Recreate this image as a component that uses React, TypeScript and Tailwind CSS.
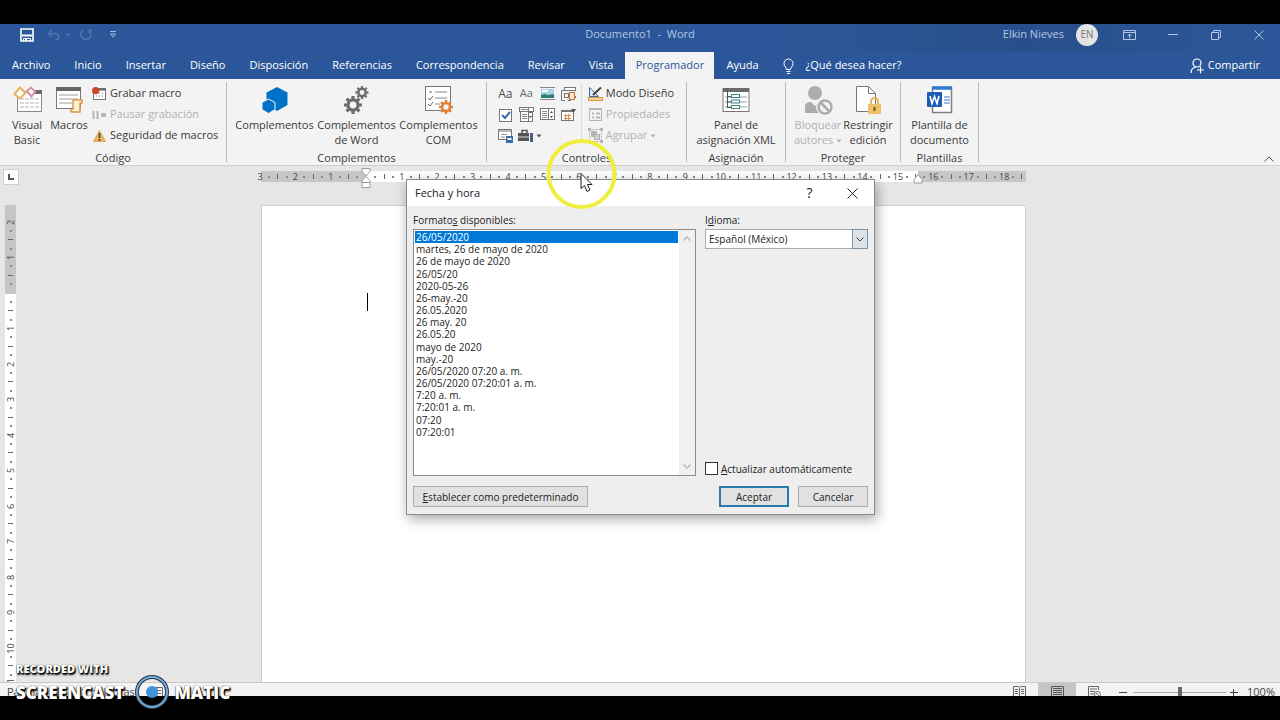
import { useState, type ReactNode } from 'react';

const TABS = [
  'Archivo',
  'Inicio',
  'Insertar',
  'Diseño',
  'Disposición',
  'Referencias',
  'Correspondencia',
  'Revisar',
  'Vista',
  'Programador',
  'Ayuda',
];

const FORMATS = [
  '26/05/2020',
  'martes, 26 de mayo de 2020',
  '26 de mayo de 2020',
  '26/05/20',
  '2020-05-26',
  '26-may.-20',
  '26.05.2020',
  '26 may. 20',
  '26.05.20',
  'mayo de 2020',
  'may.-20',
  '26/05/2020 07:20 a. m.',
  '26/05/2020 07:20:01 a. m.',
  '7:20 a. m.',
  '7:20:01 a. m.',
  '07:20',
  '07:20:01',
];

/* ---------- Icons ---------- */

function VisualBasicIcon() {
  return (
    <svg width="29" height="28" viewBox="0 0 29 28" fill="none">
      <rect x="4.5" y="5.5" width="24" height="20" fill="#fff" stroke="#8a8a8a" />
      <rect x="22" y="4" width="7" height="4" fill="#6a6a6a" />
      <path d="M7 13h20M7 17h20M7 21h20" stroke="#b5b5b5" strokeDasharray="4 1" />
      <path d="M7 1.500l5.500 5.500L7 12.500 1.500 8z" fill="#fff" stroke="#e3b55b" strokeWidth="2" />
      <path d="M14 5l4-3.500 4 4-3.500 5z" fill="#fff" stroke="#dc8f9c" strokeWidth="2" />
    </svg>
  );
}

function MacrosIcon() {
  return (
    <svg width="29" height="28" viewBox="0 0 29 28" fill="none">
      <rect x="1.5" y="1.5" width="24" height="21" fill="#fff" stroke="#777" />
      <rect x="1" y="1" width="25" height="4" fill="#666" />
      <path d="M4 9h19M4 13h19M4 17h13" stroke="#9a9a9a" />
      <path d="M18 14h9v3h-2v9h-8c-2 0-2-3 0-3h1z" fill="#fdf1dc" stroke="#d99a3e" strokeWidth="1.5" />
    </svg>
  );
}

function RecordIcon() {
  return (
    <svg width="15" height="14" viewBox="0 0 15 14" fill="none">
      <rect x="1.5" y="1.5" width="12" height="11" fill="#fff" stroke="#777" />
      <path d="M7 2.500h7" stroke="#666" strokeWidth="2" />
      <path d="M4 9h1M7 9h1M10 9h1M7 6h1M10 6h1" stroke="#777" />
      <circle cx="3.700" cy="3.700" r="3.600" fill="#cf4528" />
    </svg>
  );
}

function PauseIcon() {
  return (
    <svg width="15" height="14" viewBox="0 0 15 14" fill="none">
      <path d="M1.5 3v8M5.5 3v8" stroke="#b5b5b5" strokeWidth="2" />
      <rect x="9" y="5" width="5" height="4" rx="1" fill="#b5b5b5" />
    </svg>
  );
}

function WarningIcon() {
  return (
    <svg width="15" height="14" viewBox="0 0 15 14" fill="none">
      <path d="M7.500 1.500L13.500 12.500h-12z" fill="#f0b35e" stroke="#e8aa58" strokeLinejoin="round" />
      <path d="M7.500 4v5M7.500 10v2" stroke="#444" strokeWidth="1.600" />
    </svg>
  );
}

function AddinsIcon() {
  return (
    <svg width="28" height="28" viewBox="0 0 28 28">
      <path d="M16 1l10.500 5.500v12.500L16 25 5.500 19V6.500z" fill="#0072c6" />
      <path d="M7.500 13l6.500 3.500v7l-6.500 4-6.500-4v-7z" fill="#0072c6" stroke="#f3f3f3" />
    </svg>
  );
}

function Gear({ x, y, r, color }: { x: number; y: number; r: number; color: string }) {
  return (
    <g transform={`translate(${x} ${y})`} stroke={color} fill="none">
      <circle r={r * 0.56} strokeWidth={r * 0.36} />
      {[0, 45, 90, 135].map((a) => (
        <path
          key={a}
          transform={`rotate(${a})`}
          d={`M0 ${-r}V${-r * 0.65}M0 ${r * 0.65}V${r}`}
          strokeWidth={r * 0.36}
        />
      ))}
    </g>
  );
}

function GearsIcon() {
  return (
    <svg width="28" height="28" viewBox="0 0 28 28">
      <Gear x={10} y={19} r={9} color="#6d6d6d" />
      <Gear x={19} y={6.5} r={6.5} color="#6d6d6d" />
    </svg>
  );
}

function ComAddinsIcon() {
  return (
    <svg width="30" height="28" viewBox="0 0 30 28" fill="none">
      <rect x="1.5" y="0.5" width="25" height="24" fill="#fff" stroke="#777" />
      <path d="M11 6h12M11 12h12M11 18h5" stroke="#888" />
      <path d="M5 6h3M4 12l2 2 3-4M4 18l2 2 3-4" stroke="#666" />
      <circle cx="22" cy="21" r="5" fill="#f3f3f3" />
      <Gear x={22} y={21} r={7} color="#e07f35" />
    </svg>
  );
}

function XmlPaneIcon() {
  return (
    <svg width="28" height="26" viewBox="0 0 28 26" fill="none">
      <rect x="1" y="1.5" width="26" height="23" fill="#fff" stroke="#777" />
      <path d="M1 3h26" stroke="#6a6a6a" strokeWidth="4" />
      <path d="M3 10h22M3 15h22M3 20h22" stroke="#8aa7a3" />
      <path d="M5.500 1v20M5 9.500h4M5 15h4M5 20.500h4" stroke="#555" />
      <rect x="9.500" y="7.500" width="8" height="3" fill="#fff" stroke="#3d8584" />
      <rect x="9.500" y="13" width="8" height="3" fill="#fff" stroke="#3d8584" />
      <rect x="9.500" y="18.500" width="8" height="3" fill="#fff" stroke="#3d8584" />
    </svg>
  );
}

function BlockAuthorsIcon() {
  return (
    <svg width="30" height="30" viewBox="0 0 30 30" fill="none">
      <circle cx="12" cy="8" r="7" fill="#acacac" />
      <path d="M2 28v-6c0-4 3-5 6-5l4 4 4-4 4 2-4 9z" fill="#acacac" />
      <circle cx="22" cy="22" r="9" fill="#f3f3f3" />
      <circle cx="22" cy="22" r="6.500" stroke="#acacac" strokeWidth="2.500" />
      <path d="M17.500 17.500l9 9" stroke="#acacac" strokeWidth="2.500" />
    </svg>
  );
}

function RestrictIcon() {
  return (
    <svg width="28" height="30" viewBox="0 0 28 30" fill="none">
      <path d="M2.500 1.500h12l7 7v18h-19z" fill="#fff" stroke="#777" />
      <path d="M14.500 1.500v7h7" stroke="#777" />
      <path d="M17 20v-3.500a3.500 3.500 0 017 0V20" stroke="#e8b655" strokeWidth="2" />
      <rect x="14" y="19" width="13" height="10" fill="#eec168" />
      <path d="M20.500 22v4" stroke="#7a5a1c" strokeWidth="2" />
    </svg>
  );
}

function TemplateIcon() {
  return (
    <svg width="28" height="30" viewBox="0 0 28 30" fill="none">
      <path d="M6.500 2.500h19v25h-19z" fill="#fff" stroke="#808080" strokeWidth="1.500" />
      <path d="M6 3h20" stroke="#2f7ad0" strokeWidth="3.500" />
      <path d="M18 12h6M18 15h6M18 18h6" stroke="#2f7ad0" />
      <rect x="1" y="7" width="15" height="15" rx="1" fill="#1d5cb4" />
      <path d="M4 11l2 7.500 2.500-7 2.500 7 2-7.500" stroke="#fff" strokeWidth="1.600" />
    </svg>
  );
}

function RichTextIcon({ faint = false }: { faint?: boolean }) {
  return <span className={faint ? 'text-[11px] text-[#6a6a6a]' : 'text-[12px] text-[#4a4a4a]'}>Aa</span>;
}

function PictureIcon() {
  return (
    <svg width="15" height="13" viewBox="0 0 15 13" fill="none">
      <path d="M0 .5h15M0 12.500h15" stroke="#888" />
      <rect x="1" y="2" width="13" height="9" fill="#a9d3e6" />
      <path d="M1 11V8l4-1 3 1 6-1v4z" fill="#2f7e75" />
      <path d="M2 4h6" stroke="#fff" strokeWidth="2" />
    </svg>
  );
}

function BuildingBlocksIcon() {
  return (
    <svg width="15" height="14" viewBox="0 0 15 14" fill="none">
      <path d="M3 3.500H.5v10H4M7 13.500h3M14.500 9v2" stroke="#777" />
      <rect x="3.500" y=".5" width="11" height="3" fill="#fff" stroke="#777" />
      <rect x="3.500" y="6.500" width="4" height="4" stroke="#777" />
      <rect x="8.500" y="5.500" width="5" height="7" fill="#fbe3d0" stroke="#d6722f" />
    </svg>
  );
}

function CheckIcon() {
  return (
    <svg width="15" height="14" viewBox="0 0 15 14" fill="none">
      <rect x="1.500" y="1.500" width="12" height="12" fill="#fff" stroke="#777" />
      <path d="M4 7l3 3 5-6" stroke="#3b6da5" strokeWidth="2" />
    </svg>
  );
}

function ComboIcon({ list = false }: { list?: boolean }) {
  return (
    <svg width="15" height="15" viewBox="0 0 15 15" fill="none">
      {list ? (
        <>
          <rect x=".5" y=".5" width="14" height="4" fill="#fff" stroke="#777" />
          <rect x="1.500" y="4.500" width="12" height="10" fill="#fff" stroke="#777" />
          <path d="M3 7.500h5M3 9.500h5M3 11.500h5M2 2.500h7" stroke="#888" />
          <path d="M9.500 1v13" stroke="#777" />
        </>
      ) : (
        <>
          <rect x=".5" y="1.500" width="14" height="11" fill="#fff" stroke="#777" />
          <path d="M2 4.500h5M2 6.500h5M2 8.500h5M2 10.500h5" stroke="#888" />
          <path d="M8.500 1.500v11" stroke="#777" />
        </>
      )}
      <path d="M10 6l1.500-2L13 6zM10 9l1.500 2L13 9z" fill="#444" />
    </svg>
  );
}

function DatePickerIcon() {
  return (
    <svg width="15" height="14" viewBox="0 0 15 14" fill="none">
      <rect x=".5" y="2.500" width="12" height="10" fill="#fff" stroke="#777" />
      <path d="M1 3h12" stroke="#777" strokeWidth="2" />
      <path d="M3 7.500h7M3 10.500h7M4.500 6v6M7.500 6v6" stroke="#d98a4e" />
      <path d="M10 1h5l-2.500 4z" fill="#555" />
    </svg>
  );
}

function RepeatIcon() {
  return (
    <svg width="15" height="14" viewBox="0 0 15 14" fill="none">
      <rect x=".5" y=".5" width="13" height="10" fill="#fff" stroke="#777" />
      <path d="M1 2h13" stroke="#777" />
      <path d="M3 5.500h6M3 8h4" stroke="#999" />
      <rect x="8" y="7" width="7" height="7" fill="#3b6da5" />
      <path d="M9.500 9h4v2h-4z" fill="#fff" />
    </svg>
  );
}

function ToolboxIcon() {
  return (
    <svg width="16" height="14" viewBox="0 0 16 14" fill="none">
      <path d="M4 4V1.500h5V4" stroke="#555" strokeWidth="1.500" />
      <rect x="0" y="4" width="11" height="8" fill="#555" />
      <path d="M0 8h11" stroke="#ddd" />
      <path d="M13.500 4v9" stroke="#44617f" strokeWidth="3" />
    </svg>
  );
}

function DesignModeIcon() {
  return (
    <svg width="15" height="15" viewBox="0 0 15 15" fill="none">
      <path d="M1.500 1.500v9h9z" fill="#dbe7f3" stroke="#3b6da5" />
      <path d="M5 9l8-7.500" stroke="#444" strokeWidth="2" />
      <rect x=".5" y="11.500" width="14" height="3" fill="#f7cf98" stroke="#d99a3e" />
    </svg>
  );
}

function PropertiesIcon() {
  return (
    <svg width="15" height="15" viewBox="0 0 15 15" fill="none">
      <rect x="1.500" y="1.500" width="12" height="12" stroke="#b5b5b5" />
      <path d="M1 2h13" stroke="#b5b5b5" strokeWidth="2" />
      <path d="M4 6.500h2M8 6.500h4M4 10.500h2M8 10.500h4" stroke="#b5b5b5" strokeWidth="2" />
    </svg>
  );
}

function GroupIcon() {
  return (
    <svg width="15" height="15" viewBox="0 0 15 15" fill="none">
      <rect x="1.500" y="1.500" width="12" height="12" stroke="#b5b5b5" strokeDasharray="2 1" />
      <rect x="3" y="3" width="6" height="6" fill="#b5b5b5" />
      <rect x="6.500" y="6.500" width="5" height="5" fill="#d5d5d5" stroke="#b0b0b0" />
      <path d="M0 0h3v3H0zM12 0h3v3h-3zM0 12h3v3H0zM12 12h3v3h-3z" fill="#b5b5b5" />
    </svg>
  );
}

function Caret({ color }: { color: string }) {
  return (
    <svg width="6" height="4" viewBox="0 0 6 4" className="inline-block">
      <path d="M0.500 0.500h5L3 3.500z" fill={color} />
    </svg>
  );
}

/* ---------- Title bar and tabs ---------- */

function TitleBar() {
  return (
    <header className="grid h-7 grid-cols-[1fr_auto_1fr] items-start bg-linear-to-r from-[#2b579a] from-60% via-[#294f8b] via-80% to-[#2b579a] text-[11px] text-[#b4c6e2]">
      <div className="flex h-[21px] items-center pl-5">
        <button aria-label="Guardar" className="mr-[13px]">
          <svg width="14" height="14" viewBox="0 0 14 14" fill="none">
            <path d="M1 1h12v12H1z" stroke="#fff" strokeWidth="1.600" />
            <path d="M2 7.500h10" stroke="#fff" strokeWidth="2" />
            <path d="M3.500 13v-2.500h7V13" stroke="#fff" />
            <path d="M6 13v-2" stroke="#fff" strokeWidth="2" />
          </svg>
        </button>
        <button aria-label="Deshacer" className="flex items-center gap-1">
          <svg width="14" height="12" viewBox="0 0 14 12" fill="none">
            <path d="M5 1L1.500 4.500 5 8M2 4.500h6.500a3.200 3.200 0 010 6.500" stroke="#4c72b0" strokeWidth="1.600" />
          </svg>
          <Caret color="#4c72b0" />
        </button>
        <button aria-label="Repetir" className="ml-2">
          <svg width="14" height="13" viewBox="0 0 14 13" fill="none">
            <path d="M4 2.500a5 5 0 106 0M10.500 5.500V2h3" stroke="#4c72b0" strokeWidth="1.600" />
          </svg>
        </button>
        <button aria-label="Personalizar" className="ml-4">
          <svg width="8" height="8" viewBox="0 0 8 8" fill="none">
            <path d="M1 .5h6M1.500 3h5L4 6z" stroke="#a5badc" />
          </svg>
        </button>
      </div>
      <h1 className="flex h-[21px] items-center whitespace-pre">{'Documento1  -  Word'}</h1>
      <div className="flex h-[21px] items-center justify-end">
        <span>Elkin Nieves</span>
        <span className="mr-[10px] ml-3 flex size-[22px] items-center justify-center rounded-full bg-[#e4e4e4] text-[10px] text-[#777]">
          EN
        </span>
        <button aria-label="Opciones de la cinta" className="flex w-[43px] justify-center">
          <svg width="13" height="10" viewBox="0 0 13 10" fill="none" stroke="#b4c6e2">
            <path d="M.5.5h12v9H.5zM.5 2.500h12M6.500 8.500v-4M4.500 6l2-2 2 2" />
          </svg>
        </button>
        <button aria-label="Minimizar" className="flex w-[43px] justify-center">
          <svg width="10" height="10" viewBox="0 0 10 10" stroke="#b4c6e2">
            <path d="M0 4.500h10" />
          </svg>
        </button>
        <button aria-label="Restaurar" className="flex w-[43px] justify-center">
          <svg width="10" height="10" viewBox="0 0 10 10" fill="none" stroke="#b4c6e2">
            <path d="M.5 2.500h7v7h-7zM2.500 2.500v-2h7v7h-2" />
          </svg>
        </button>
        <button aria-label="Cerrar" className="flex w-[43px] justify-center">
          <svg width="10" height="10" viewBox="0 0 10 10" stroke="#b4c6e2">
            <path d="M.5.5l9 9M9.500.5l-9 9" />
          </svg>
        </button>
      </div>
    </header>
  );
}

function TabBar() {
  return (
    <nav className="flex h-[27px] bg-[#2b579a] text-[11px] text-white">
      {TABS.map((tab) => (
        <button
          key={tab}
          className={tab === 'Programador' ? 'w-[89px] bg-[#f3f3f3] text-[#2b579a]' : 'px-3'}
        >
          {tab}
        </button>
      ))}
      <button className="ml-3 flex items-center gap-3">
        <svg width="11" height="16" viewBox="0 0 11 16" fill="none" stroke="#fff">
          <path d="M3.500 11.500c0-2-2.500-3-2.500-6a4.500 4.500 0 019 0c0 3-2.500 4-2.500 6zM3.500 13.500h4M4 15.500h3" />
        </svg>
        ¿Qué desea hacer?
      </button>
      <button className="mr-5 ml-auto flex items-center gap-1">
        <svg width="14" height="16" viewBox="0 0 14 16" fill="none" stroke="#fff" strokeWidth="1.200">
          <circle cx="7" cy="5" r="4" />
          <path d="M1 15c0-3.500 2-5.500 5-6M10.500 8.500v7M7 12h7" />
        </svg>
        Compartir
      </button>
    </nav>
  );
}

/* ---------- Ribbon ---------- */

function Group({ title, className, children }: { title: string; className: string; children: ReactNode }) {
  return (
    <section className={`flex flex-col pt-1 ${className}`}>
      <div className="flex flex-1 justify-center">{children}</div>
      <h2 className="text-center leading-[15px]">{title}</h2>
    </section>
  );
}

function Divider() {
  return <div className="my-[3px] w-px bg-[#b9b9b9]" />;
}

function BigButton({
  icon,
  className,
  children,
}: {
  icon: ReactNode;
  className: string;
  children: ReactNode;
}) {
  return (
    <button className={`flex flex-col items-center leading-[15px] ${className}`}>
      <span className="flex h-[34px] items-center">{icon}</span>
      <span className="whitespace-nowrap">{children}</span>
    </button>
  );
}

function SmallButton({ icon, disabled, children }: { icon: ReactNode; disabled?: boolean; children: ReactNode }) {
  return (
    <button
      disabled={disabled}
      className="flex h-[21px] items-center gap-[3px] whitespace-nowrap disabled:text-[#b1b1b1]"
    >
      {icon}
      {children}
    </button>
  );
}

function Ribbon() {
  const controls = [
    <RichTextIcon />,
    <RichTextIcon faint />,
    <PictureIcon />,
    <BuildingBlocksIcon />,
    <CheckIcon />,
    <ComboIcon list />,
    <ComboIcon />,
    <DatePickerIcon />,
    <RepeatIcon />,
  ];

  return (
    <div className="flex h-[87px] border-b border-[#d0d0d0] bg-[#f3f3f3] text-[11px] text-[#3a3a3a]">
      <Group title="Código" className="w-[226px]">
        <BigButton icon={<VisualBasicIcon />} className="w-[42px]">
          Visual
          <br />
          Basic
        </BigButton>
        <BigButton icon={<MacrosIcon />} className="w-[42px]">
          Macros
        </BigButton>
        <div className="ml-[2px] w-[128px]">
          <SmallButton icon={<RecordIcon />}>Grabar macro</SmallButton>
          <SmallButton icon={<PauseIcon />} disabled>
            Pausar grabación
          </SmallButton>
          <SmallButton icon={<WarningIcon />}>Seguridad de macros</SmallButton>
        </div>
      </Group>
      <Divider />
      <Group title="Complementos" className="w-[259px]">
        <BigButton icon={<AddinsIcon />} className="w-[82px]">
          Complementos
        </BigButton>
        <BigButton icon={<GearsIcon />} className="w-[82px]">
          Complementos
          <br />
          de Word
        </BigButton>
        <BigButton icon={<ComAddinsIcon />} className="w-[82px]">
          Complementos
          <br />
          COM
        </BigButton>
      </Group>
      <Divider />
      <Group title="Controles" className="w-[199px]">
        <div className="grid w-[84px] grid-cols-4 grid-rows-[21px_21px_21px]">
          {controls.map((icon, i) => (
            <button key={i} className="flex items-center justify-center">
              {icon}
            </button>
          ))}
          <button className="col-span-2 flex items-center gap-[2px] pl-[2px]">
            <ToolboxIcon />
            <Caret color="#555" />
          </button>
        </div>
        <div className="mr-[6px] ml-[2px] h-[58px] w-px bg-[#dcdcdc]" />
        <div className="pr-1">
          <SmallButton icon={<DesignModeIcon />}>Modo Diseño</SmallButton>
          <SmallButton icon={<PropertiesIcon />} disabled>
            Propiedades
          </SmallButton>
          <SmallButton icon={<GroupIcon />} disabled>
            Agrupar <Caret color="#b1b1b1" />
          </SmallButton>
        </div>
      </Group>
      <Divider />
      <Group title="Asignación" className="w-[98px]">
        <BigButton icon={<XmlPaneIcon />} className="w-[82px]">
          Panel de
          <br />
          asignación XML
        </BigButton>
      </Group>
      <Divider />
      <Group title="Proteger" className="w-[114px]">
        <BigButton icon={<BlockAuthorsIcon />} className="w-[50px] text-[#b1b1b1]">
          Bloquear
          <br />
          autores <Caret color="#b1b1b1" />
        </BigButton>
        <BigButton icon={<RestrictIcon />} className="w-[50px]">
          Restringir
          <br />
          edición
        </BigButton>
      </Group>
      <Divider />
      <Group title="Plantillas" className="w-[77px]">
        <BigButton icon={<TemplateIcon />} className="w-[66px]">
          Plantilla de
          <br />
          documento
        </BigButton>
      </Group>
      <Divider />
      <button aria-label="Contraer la cinta" className="mt-auto mr-[6px] mb-[3px] ml-auto">
        <svg width="10" height="6" viewBox="0 0 10 6" fill="none" stroke="#555">
          <path d="M.5 5.500L5 1l4.500 4.500" />
        </svg>
      </button>
    </div>
  );
}

/* ---------- Rulers ---------- */

// One entry per quarter of a centimetre
function RulerMark({ step }: { step: number }) {
  if (step === 0) return null;
  if (step % 4 === 0) return <span>{Math.abs(step / 4)}</span>;
  if (step % 2 === 0) return <span className="h-[5px] w-px shrink-0 bg-[#666]" />;
  return <span className="size-[2px] shrink-0 bg-[#888]" />;
}

function HorizontalRuler() {
  const steps = Array.from({ length: 87 }, (_, i) => i - 12);

  return (
    <div className="relative mx-auto mt-[5px] h-[11px] w-[765px] bg-[linear-gradient(to_right,#c6c6c6_105px,#fff_105px,#fff_657px,#c6c6c6_657px)]">
      <div className="absolute inset-y-0 right-1 -left-px flex justify-between text-[9px] leading-[11px] text-[#444]">
        {steps.map((step) => (
          <div key={step} className="flex w-0 items-center justify-center">
            <RulerMark step={step} />
          </div>
        ))}
      </div>
      <svg className="absolute -top-[3px] left-[100px]" width="10" height="20" viewBox="0 0 10 20" fill="#fff" stroke="#999">
        <path d="M1 .5h8v3L5 8 1 3.500zM5 8.500l4 4v2H1v-2zM1 14.500h8v5H1z" />
      </svg>
      <svg className="absolute top-[3px] left-[652px]" width="10" height="10" viewBox="0 0 10 10" fill="#fff" stroke="#999">
        <path d="M5 .5l4 5v3.500H1V5.500z" />
      </svg>
    </div>
  );
}

function VerticalRuler() {
  const steps = Array.from({ length: 53 }, (_, i) => i - 8);

  return (
    <div className="ml-[5px] h-full w-[11px] overflow-hidden bg-[linear-gradient(to_bottom,#c6c6c6_89px,#fff_89px)] pt-[17px]">
      <div className="flex h-[462px] flex-col justify-between text-[9px] leading-[11px] text-[#444]">
        {steps.map((step) => (
          <div key={step} className="flex h-0 items-center justify-center">
            <div className="flex -rotate-90 items-center justify-center">
              <RulerMark step={step} />
            </div>
          </div>
        ))}
      </div>
    </div>
  );
}

/* ---------- Date and time dialog ---------- */

function DateTimeDialog() {
  const [selected, setSelected] = useState(0);

  return (
    <div
      role="dialog"
      aria-labelledby="dialog-title"
      className="absolute top-[179px] left-[406px] w-[469px] border border-[#8a8a8a] bg-[#eeeeee] text-[10px] leading-3 text-[#222] shadow-[2px_4px_12px_rgba(0,0,0,0.35)]"
    >
      <div className="flex h-[26px] items-center bg-white pl-2">
        <h2 id="dialog-title" className="text-[11px]">
          Fecha y hora
        </h2>
        <button className="ml-auto w-[43px] text-[14px]" aria-label="Ayuda">
          ?
        </button>
        <button className="flex w-[43px] justify-center" aria-label="Cerrar">
          <svg width="11" height="11" viewBox="0 0 11 11" stroke="#222">
            <path d="M.5.5l10 10M10.500.5l-10 10" />
          </svg>
        </button>
      </div>

      <div className="flex gap-[9px] px-[6px] pt-2">
        <div className="w-[283px]">
          <p id="formats-label" className="mb-[3px]">
            Formato<u>s</u> disponibles:
          </p>
          <div className="flex h-[247px] border border-[#8c8c8c] bg-white">
            <ul
              role="listbox"
              aria-labelledby="formats-label"
              className="m-px flex h-[207px] flex-1 flex-col"
            >
              {FORMATS.map((format, i) => (
                <li
                  key={format}
                  role="option"
                  aria-selected={i === selected}
                  onClick={() => setSelected(i)}
                  className={`flex flex-1 items-center pl-px ${i === selected ? 'bg-[#0078d7] text-white' : ''}`}
                >
                  {format}
                </li>
              ))}
            </ul>
            <div className="flex w-4 flex-col items-center justify-between bg-[#f0f0f0] py-[6px]">
              <svg width="8" height="5" viewBox="0 0 8 5" fill="none" stroke="#bdbdbd" strokeWidth="1.500">
                <path d="M.5 4.500L4 1l3.500 3.500" />
              </svg>
              <svg width="8" height="5" viewBox="0 0 8 5" fill="none" stroke="#bdbdbd" strokeWidth="1.500">
                <path d="M.5.5L4 4 7.500.5" />
              </svg>
            </div>
          </div>
        </div>

        <div className="flex flex-1 flex-col">
          <label htmlFor="language" className="mb-[3px]">
            I<u>d</u>ioma:
          </label>
          <div className="relative">
            <select
              id="language"
              className="h-5 w-full appearance-none border border-[#aaa] bg-white pl-[3px] text-[10px]"
            >
              <option>Español (México)</option>
            </select>
            <span className="pointer-events-none absolute inset-y-0 right-0 flex w-4 items-center justify-center border border-[#7d93a6] bg-[#dde3e8]">
              <svg width="8" height="5" viewBox="0 0 8 5" fill="none" stroke="#444">
                <path d="M.5.5L4 4 7.500.5" />
              </svg>
            </span>
          </div>
          <label className="mt-auto mb-px flex items-center gap-[3px]">
            <input type="checkbox" className="size-[13px] appearance-none border border-[#333] bg-white" />
            <span>
              <u>A</u>ctualizar automáticamente
            </span>
          </label>
        </div>
      </div>

      <div className="flex px-[6px] pt-[10px] pb-[7px]">
        <button className="h-[21px] w-[175px] border border-[#adadad] bg-[#e1e1e1]">
          <u>E</u>stablecer como predeterminado
        </button>
        <button className="ml-auto h-[21px] w-[70px] border-2 border-[#2a7ab0] bg-[#e1e1e1]">Aceptar</button>
        <button className="ml-[9px] h-[21px] w-[70px] border border-[#adadad] bg-[#e1e1e1]">Cancelar</button>
      </div>
    </div>
  );
}

/* ---------- Status bar ---------- */

function StatusBar() {
  return (
    <footer className="h-[14px] shrink-0 overflow-hidden border-t border-[#c8c8c8] bg-[#f3f3f3] text-[11px] text-[#444]">
      <div className="flex h-[19px] items-center">
        <span className="pl-[7px]">Página 1 de 1</span>
        <span className="ml-[6px]">0 palabras</span>
        <svg className="ml-4" width="12" height="12" viewBox="0 0 12 12" fill="none" stroke="#666">
          <path d="M.5.5h11v11H.5zM2 3.500h8M2 6.500h8M6 1v10" />
        </svg>
        <div className="ml-auto flex h-full items-center">
          <button aria-label="Modo de lectura" className="flex w-[38px] justify-center">
            <svg width="13" height="13" viewBox="0 0 13 13" fill="none" stroke="#666">
              <path d="M.5.5h5l1 1 1-1h5v11h-5l-1 1-1-1h-5zM6.500 1v12M2 3.500h3M2 5.500h3M2 7.500h3M8 3.500h3M8 5.500h3M8 7.500h3" />
            </svg>
          </button>
          <button aria-label="Diseño de impresión" className="flex h-full w-[38px] items-center justify-center bg-[#c6c6c6]">
            <svg width="13" height="13" viewBox="0 0 13 13" fill="none" stroke="#555">
              <path d="M.5.5h12v12H.5zM2 2.500h9M2 4.500h9M2 6.500h9M2 8.500h9M2 10.500h9" />
            </svg>
          </button>
          <button aria-label="Diseño web" className="flex w-[37px] justify-center">
            <svg width="13" height="13" viewBox="0 0 13 13" fill="none" stroke="#666">
              <path d="M6 12.500H.5V.5h10V4M2 3h7M2 5.500h5M2 8h4" />
              <circle cx="9.500" cy="8.500" r="3" />
              <path d="M8 7l3 3" />
            </svg>
          </button>
          <button aria-label="Alejar" className="flex w-5 justify-center">
            <svg width="8" height="8" viewBox="0 0 8 8" stroke="#444">
              <path d="M0 3.500h8" />
            </svg>
          </button>
          <input
            type="range"
            aria-label="Zoom"
            defaultValue={50}
            className="h-[11px] w-[93px] appearance-none bg-[linear-gradient(#aaa,#aaa)] bg-[length:100%_1px] bg-center bg-no-repeat [&::-webkit-slider-thumb]:h-[11px] [&::-webkit-slider-thumb]:w-1 [&::-webkit-slider-thumb]:appearance-none [&::-webkit-slider-thumb]:bg-[#666]"
          />
          <button aria-label="Acercar" className="flex w-4 justify-center">
            <svg width="8" height="8" viewBox="0 0 8 8" stroke="#444">
              <path d="M0 3.500h8M3.500 0v8" />
            </svg>
          </button>
          <span className="w-[38px] text-center">100%</span>
        </div>
      </div>
    </footer>
  );
}

/* ---------- Recording overlays ---------- */

function Watermark() {
  return (
    <div className="absolute bottom-[10px] left-4 leading-none font-extrabold text-white [text-shadow:1px_1px_1px_#000,1px_2px_2px_#000,0_0_1px_#000]">
      <p className="text-[11px]">RECORDED WITH</p>
      <div className="flex items-center">
        <span className="mr-[10px] text-[17px]">SCREENCAST</span>
        <svg width="36" height="36" viewBox="0 0 36 36" fill="none">
          <circle cx="18" cy="18" r="15" stroke="#1d3b57" strokeWidth="4" />
          <circle cx="18" cy="18" r="15" stroke="#7fa9cc" strokeWidth="2" />
          <circle cx="18" cy="18" r="6" fill="#3f93dc" />
        </svg>
        <span className="ml-1 text-[17px]">MATIC</span>
      </div>
    </div>
  );
}

function Pointer() {
  return (
    <svg className="pointer-events-none absolute top-[139px] left-[546px]" width="72" height="72" viewBox="0 0 72 72" fill="none">
      <circle cx="35.500" cy="35" r="33" stroke="#f0ee3c" strokeWidth="4" />
      <path d="M35 34.500v15l3.500-3 2.500 6 3-1.500-2.500-5.500h4.500z" fill="#fff" stroke="#222" />
    </svg>
  );
}

export default function App() {
  return (
    <div className="relative flex h-screen flex-col bg-black py-6 font-['Open_Sans','Noto_Sans',sans-serif]">
      <TitleBar />
      <TabBar />
      <Ribbon />

      <main className="flex min-h-0 flex-1 flex-col overflow-hidden bg-[#e6e6e6]">
        <div className="flex h-6 shrink-0 pr-[13px]">
          <div className="w-5 pt-[3px] pl-[3px]">
            <button aria-label="Tabulación" className="flex size-4 items-center justify-center border border-[#d0d0d0] bg-white">
              <svg width="6" height="6" viewBox="0 0 6 6" fill="none">
                <path d="M1 0v5h5" stroke="#555" strokeWidth="2" />
              </svg>
            </button>
          </div>
          <HorizontalRuler />
        </div>
        <div className="flex min-h-0 flex-1 pr-[13px]">
          <div className="w-5 pt-[15px]">
            <VerticalRuler />
          </div>
          <article className="mx-auto mt-[15px] w-[765px] border border-b-0 border-[#cfcfcf] bg-white pt-[87px] pl-[105px]">
            <div className="h-[18px] w-px bg-black" />
          </article>
        </div>
      </main>

      <StatusBar />
      <DateTimeDialog />
      <Pointer />
      <Watermark />
    </div>
  );
}
